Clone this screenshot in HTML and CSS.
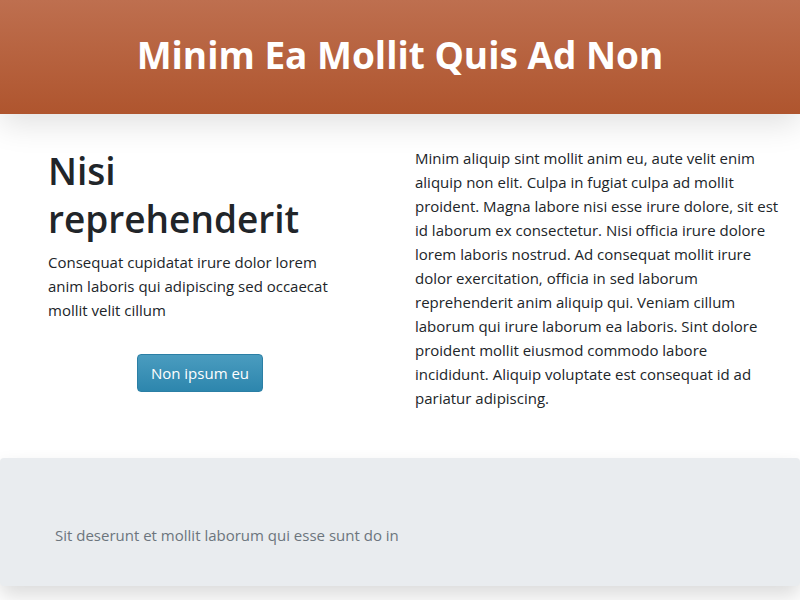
FILE: index.html
```html
<!DOCTYPE html>
<html lang="en">
<head>
<meta charset="utf-8">
<title>Minim Ea Mollit Quis Ad Non</title>
<link rel="stylesheet" href="styles.css">
</head>
<body>
<header class="masthead">
  <h1 class="masthead-title">Minim Ea Mollit Quis Ad Non</h1>
</header>
<main class="content">
  <section class="intro">
    <h2 class="intro-title">Nisi reprehenderit</h2>
    <p class="intro-text">Consequat cupidatat irure dolor lorem anim laboris qui adipiscing sed occaecat mollit velit cillum</p>
    <div class="intro-action">
      <button class="btn" type="button">Non ipsum eu</button>
    </div>
  </section>
  <section class="body-copy">
    <p>Minim aliquip sint mollit anim eu, aute velit enim aliquip non elit. Culpa in fugiat culpa ad mollit proident. Magna labore nisi esse irure dolore, sit est id laborum ex consectetur. Nisi officia irure dolore lorem laboris nostrud. Ad consequat mollit irure dolor exercitation, officia in sed laborum reprehenderit anim aliquip qui. Veniam cillum laborum qui irure laborum ea laboris. Sint dolore proident mollit eiusmod commodo labore incididunt. Aliquip voluptate est consequat id ad pariatur adipiscing.</p>
  </section>
</main>
<footer class="footer">
  <p class="footer-text">Sit deserunt et mollit laborum qui esse sunt do in</p>
</footer>
</body>
</html>
```

FILE: styles.css
```css
* { box-sizing: border-box; }
html, body { margin: 0; padding: 0; }
body {
  font-family: "Open Sans", "Noto Sans", sans-serif;
  font-size: 15px;
  line-height: 24px;
  color: #212529;
  background: #fff;
  width: 800px;
  height: 600px;
  overflow: hidden;
}
.masthead {
  height: 114px;
  background: linear-gradient(to bottom, #be6f4f, #af552e);
  display: flex;
  align-items: center;
  justify-content: center;
  box-shadow: 0 10px 30px rgba(0, 0, 0, 0.12);
  position: relative;
  z-index: 1;
}
.masthead-title {
  margin: 0 0 5px 0;
  color: #fff;
  font-size: 37px;
  font-weight: 700;
  line-height: 48px;
}
.content {
  display: grid;
  grid-template-columns: 400px 400px;
  height: 344px;
}
.intro {
  padding: 33px 48px 0 48px;
}
.intro-title {
  margin: 0 0 7px 0;
  font-size: 37px;
  font-weight: 600;
  line-height: 48px;
  color: #212529;
}
.intro-text {
  margin: 0;
}
.intro-action {
  display: flex;
  justify-content: center;
  margin-top: 32px;
}
.btn {
  font-family: inherit;
  font-size: 15px;
  line-height: 24px;
  color: #fff;
  background: linear-gradient(to bottom, #4a9cbf, #2d86ad);
  border: 1px solid #2b7fa5;
  border-radius: 4px;
  padding: 6px 12px;
  width: 126px;
  height: 38px;
}
.body-copy {
  padding: 32px 18px 0 15px;
}
.body-copy p {
  margin: 0;
}
.footer {
  height: 128px;
  background: #e9ecef;
  border-radius: 4px;
  box-shadow: 0 10px 20px rgba(0, 0, 0, 0.14);
  padding: 65px 55px 0 55px;
  position: relative;
}
.footer-text {
  margin: 0;
  color: #6c757d;
}
```
